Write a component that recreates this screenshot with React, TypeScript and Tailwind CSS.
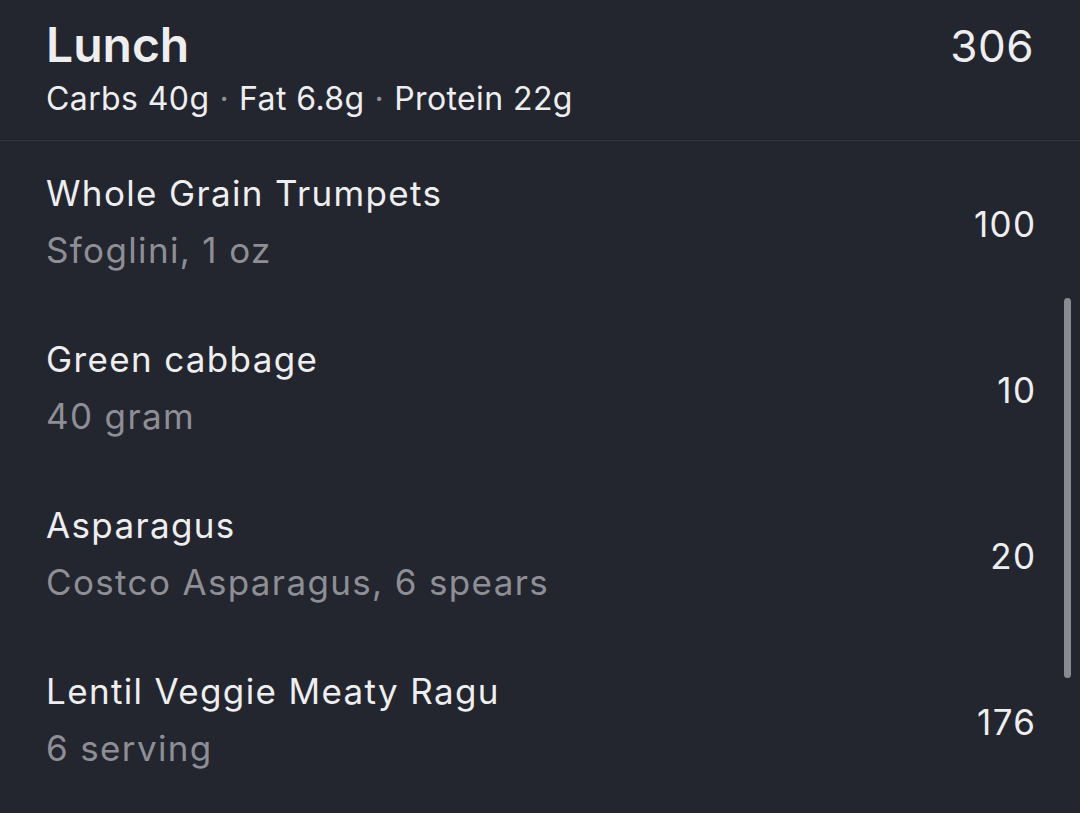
const foods = [
  { name: 'Whole Grain Trumpets', detail: 'Sfoglini, 1 oz', cals: 100 },
  { name: 'Green cabbage', detail: '40 gram', cals: 10 },
  { name: 'Asparagus', detail: 'Costco Asparagus, 6 spears', cals: 20 },
  { name: 'Lentil Veggie Meaty Ragu', detail: '6 serving', cals: 176 },
];

function FoodRow({ name, detail, cals }: { name: string; detail: string; cals: number }) {
  return (
    <div className="flex h-[166px] items-center justify-between pl-[46px] pr-[45px] text-[35px] leading-[40px] tracking-[1.35px]">
      <div className="flex flex-col pb-[6px]">
        <span className="text-[#eeeef0]">{name}</span>
        <span className="mt-[17px] text-[#8e8f96]">{detail}</span>
      </div>
      <span className="-mr-[1.35px] text-[#eeeef0]">{cals}</span>
    </div>
  );
}

export default function App() {
  return (
    <div className="relative h-[813px] w-[1080px] overflow-hidden bg-[#24262f] font-['Inter',sans-serif] antialiased">
      <div className="flex h-[141px] items-start justify-between border-b border-[#34363e] pl-[46px] pr-[46px] pt-[17px]">
        <div className="flex flex-col">
          <h1 className="text-[48px] font-semibold leading-[56px] text-[#eeeef0]">Lunch</h1>
          <div className="mt-[7px] flex items-center text-[32px] leading-[38px] tracking-[0.4px] text-[#eeeef0]">
            <span>Carbs 40g</span>
            <span className="mx-[10px] text-[#8e8f96]">·</span>
            <span>Fat 6.8g</span>
            <span className="mx-[10px] text-[#8e8f96]">·</span>
            <span>Protein 22g</span>
          </div>
        </div>
        <span className="mt-[3px] text-[44px] leading-[52px] tracking-[0.5px] text-[#eeeef0]">306</span>
      </div>

      <div className="flex flex-col">
        {foods.map((f) => (
          <FoodRow key={f.name} {...f} />
        ))}
      </div>

      {/* scroll indicator */}
      <div className="absolute left-[1064px] top-[298px] h-[380px] w-[7px] rounded-full bg-[#8a8b91]" />
    </div>
  );
}
